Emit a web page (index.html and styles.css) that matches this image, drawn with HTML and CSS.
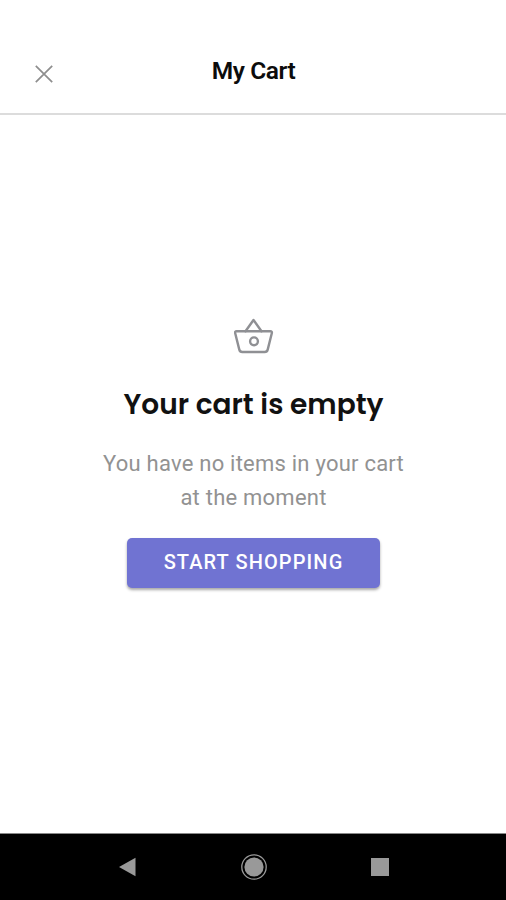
FILE: index.html
```html
<!DOCTYPE html>
<html lang="en">
<head>
<meta charset="UTF-8">
<meta name="viewport" content="width=device-width, initial-scale=1.0">
<title>My Cart</title>
<link rel="stylesheet" href="styles.css">
</head>
<body>
<header class="header">
  <button class="close" aria-label="Close">
    <svg width="18" height="18" viewBox="0 0 18 18"><path d="M.8.8l16.400 16.400M17.200.8L.8 17.200"/></svg>
  </button>
  <h1>My Cart</h1>
</header>

<main class="empty">
  <svg class="basket" width="40" height="36" viewBox="0 0 40 36">
    <path d="M2.700 13.200h33.600q2 0 1.500 2l-4.100 16.400q-.6 2.400-3 2.400H8.300q-2.400 0-3-2.400L1.200 15.200q-.5-2 1.500-2z"/>
    <path d="M11.500 13.200L19.500 2l8 11.200"/>
    <circle cx="20" cy="23.300" r="3.900"/>
  </svg>
  <h2>Your cart is empty</h2>
  <p>You have no items in your cart<br>at the moment</p>
  <button class="btn">START SHOPPING</button>
</main>

<!-- Android nav bar -->
<nav class="navbar">
  <svg width="18" height="20" viewBox="0 0 18 20"><path d="M16.500.7v18.600L0 10z"/></svg>
  <svg width="26" height="26" viewBox="0 0 26 26"><circle class="ring" cx="13" cy="13" r="12.200"/><circle cx="13" cy="13" r="9.600"/></svg>
  <svg width="18" height="18" viewBox="0 0 18 18"><path d="M0 0h18v18H0z"/></svg>
</nav>
</body>
</html>
```
FILE: styles.css
```css
:root { --primary:#7073d2; --grey:#8f9094; }
*{box-sizing:border-box;}
body{margin:0;height:900px;display:flex;flex-direction:column;background:#fff;font-family:Roboto,Arial,sans-serif;}
h1,h2,p{margin:0;}
button{font-family:inherit;border:none;cursor:pointer;}

.header{height:115px;padding:30px 34px 0 35px;display:grid;grid-template-columns:18px 1fr 18px;align-items:center;border-bottom:2px solid #dcdcdc;}
.header h1{padding-bottom:1px;font-size:24.5px;line-height:28px;font-weight:600;letter-spacing:-.4px;text-align:center;color:#0c0c0c;}
.close{padding:4px 0 0;background:none;line-height:0;}
.close svg{fill:none;stroke:#8e8e8e;stroke-width:1.7;}

.empty{flex:1;display:flex;flex-direction:column;align-items:center;padding:203px 0 0 1px;}
.basket{fill:none;stroke:var(--grey);stroke-width:2.4;stroke-linejoin:round;stroke-linecap:round;}
.empty h2{margin-top:31px;font-family:Poppins,Inter,sans-serif;font-size:28px;line-height:40px;font-weight:600;color:#111;white-space:nowrap;}
.empty p{margin-top:22px;font-size:22px;line-height:34px;letter-spacing:.23px;text-align:center;color:#929292;}
.btn{width:253px;height:50px;margin-top:23px;padding:0 0 2px;border-radius:5px;background:var(--primary);color:#fff;font-size:20px;font-weight:500;letter-spacing:1.1px;box-shadow:0 2px 3px rgba(0,0,0,.35);}

.navbar{height:67px;padding-left:1px;background:#000;border-top:1px solid #888;display:flex;justify-content:center;align-items:center;gap:104px;}
.navbar svg{fill:#999;}
.navbar .ring{fill:none;stroke:#999;stroke-width:1.3;}
```
